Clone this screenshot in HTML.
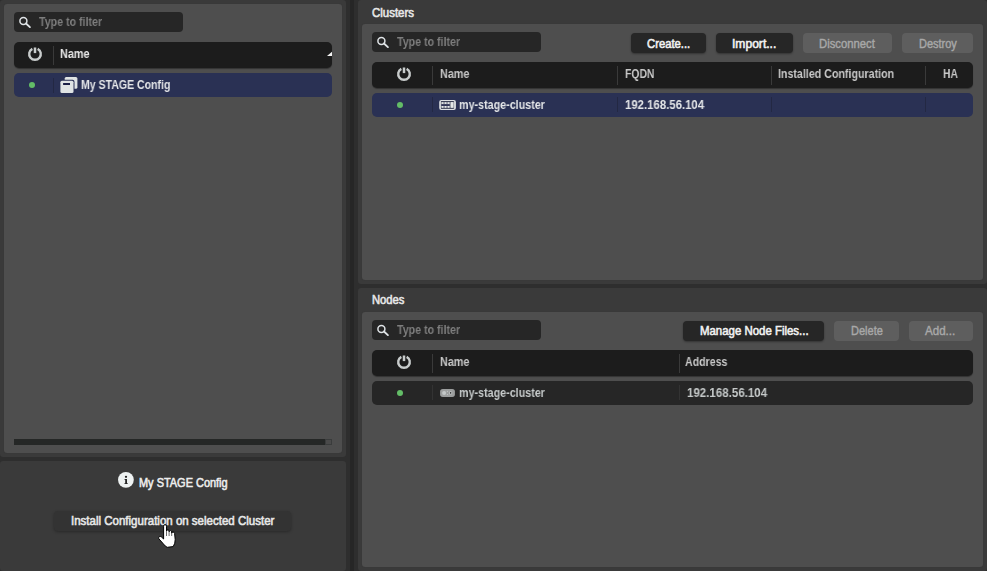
<!DOCTYPE html>
<html><head><meta charset="utf-8">
<style>
*{box-sizing:border-box;margin:0;padding:0}
html,body{width:987px;height:571px;overflow:hidden;background:#2e2e2e;font-family:"Liberation Sans",sans-serif;font-size:12px;position:relative}
.a{position:absolute}
svg{position:absolute;overflow:visible}
.outer{position:absolute;background:#3a3a3a;border-radius:3px}
.inner{position:absolute;background:#4e4e4e;border-radius:3px;box-shadow:0 0 1px 0 #333}
.search{position:absolute;background:#262626;border-radius:4px}
.hdr{position:absolute;background:#1c1c1c;border-radius:5px;box-shadow:0 1px 1px rgba(0,0,0,.35)}
.rowsel{position:absolute;background:#2a3154;border-radius:5px}
.row{position:absolute;background:#262626;border-radius:5px}
.btn{position:absolute;background:#262626;border-radius:4px;box-shadow:0 1px 2px rgba(0,0,0,.35)}
.btnd{position:absolute;background:#5e5e5e;border-radius:4px}
.t{position:absolute;white-space:nowrap;line-height:14px;font-size:12px;color:#e6e6e6;transform-origin:0 0}
.sep{position:absolute;width:1px;background:#3a3a3a}
.dot{position:absolute;width:6.4px;height:6.4px;border-radius:50%;background:#63bd67}
</style></head><body>
<!-- splitter center -->
<div class="a" style="left:350px;top:0;width:4px;height:571px;background:#262626"></div>

<!-- LEFT TOP -->
<div class="outer" style="left:0;top:0;width:346px;height:457px"></div>
<div class="inner" style="left:4px;top:4px;width:338px;height:449px"></div>
<div class="search" style="left:14px;top:12px;width:169px;height:20px"></div>
<svg style="left:14px;top:12px" width="20" height="20"><circle cx="9.4" cy="8.9" r="3.5" fill="none" stroke="#dfe3e6" stroke-width="1.5"/><path d="M12 11.5L15.9 15.1" stroke="#dfe3e6" stroke-width="1.9" stroke-linecap="round"/></svg>
<div class="hdr" style="left:14px;top:42px;width:318px;height:26px"></div>
<svg style="left:27px;top:45.7px" width="16" height="16"><path d="M5.37 2.83A5.8 5.8 0 1 0 10.63 2.83" fill="none" stroke="#c8cccc" stroke-width="2.4"/><rect x="6.75" y="1.5" width="2.5" height="5.6" fill="#c8cccc"/></svg>
<div class="sep" style="left:53px;top:46px;height:19px"></div>
<svg style="left:326px;top:51px" width="7" height="6"><path d="M1 5L6 5L6 0.8Z" fill="#f4f4f4"/></svg>
<div class="rowsel" style="left:14px;top:73px;width:318px;height:24px"></div>
<div class="dot" style="left:28.8px;top:81.8px"></div>
<div class="sep" style="left:53px;top:78px;height:15px;background:#232843"></div>
<svg style="left:56px;top:74px" width="26" height="22">
<rect x="8.7" y="2.9" width="12.7" height="11.9" rx="1.5" fill="#e0e4e4"/>
<rect x="3.4" y="5.7" width="15.1" height="14.4" rx="2" fill="#2a3154"/>
<rect x="4.4" y="6.7" width="13.1" height="12.4" rx="1.5" fill="#e0e4e4"/>
<rect x="7.1" y="9" width="6.9" height="2" fill="#1a1f45"/>
</svg>
<!-- scrollbar -->
<div class="a" style="left:14px;top:439px;width:311px;height:6px;background:#252726"></div>
<div class="a" style="left:325px;top:439px;width:7px;height:6px;background:#4a4a4a;border:1px solid #3a3c3c"></div>

<!-- LEFT BOTTOM -->
<div class="outer" style="left:0;top:461px;width:346px;height:110px"></div>
<svg style="left:114px;top:468px" width="24" height="24">
<circle cx="11.9" cy="11.8" r="7.9" fill="#eef2f2"/>
<circle cx="12" cy="8.8" r="1.15" fill="#252525"/>
<path d="M10.6 11H13V15.2H13.8V16.1H10.4V15.2H11.2V11.9H10.6Z" fill="#252525"/>
</svg>
<div class="btn" style="left:54px;top:511px;width:237px;height:20px;background:#333;box-shadow:0 1px 3px rgba(0,0,0,.3)"></div>

<!-- CLUSTERS -->
<div class="outer" style="left:358px;top:0;width:629px;height:284px"></div>
<div class="inner" style="left:362px;top:24px;width:621px;height:256px"></div>
<div class="search" style="left:372px;top:32px;width:169px;height:20px"></div>
<svg style="left:372px;top:32px" width="20" height="20"><circle cx="9.4" cy="8.9" r="3.5" fill="none" stroke="#dfe3e6" stroke-width="1.5"/><path d="M12 11.5L15.9 15.1" stroke="#dfe3e6" stroke-width="1.9" stroke-linecap="round"/></svg>
<div class="btn" style="left:631px;top:33px;width:75px;height:20px"></div>
<div class="btn" style="left:716px;top:33px;width:77px;height:20px"></div>
<div class="btnd" style="left:803px;top:33px;width:89px;height:20px"></div>
<div class="btnd" style="left:902px;top:33px;width:71px;height:20px"></div>
<div class="hdr" style="left:372px;top:62px;width:601px;height:26px"></div>
<svg style="left:396px;top:65.5px" width="16" height="16"><path d="M5.37 2.83A5.8 5.8 0 1 0 10.63 2.83" fill="none" stroke="#c8cccc" stroke-width="2.4"/><rect x="6.75" y="1.5" width="2.5" height="5.6" fill="#c8cccc"/></svg>
<div class="sep" style="left:432px;top:66px;height:19px"></div>
<div class="sep" style="left:617px;top:66px;height:19px"></div>
<div class="sep" style="left:771px;top:66px;height:19px"></div>
<div class="sep" style="left:925px;top:66px;height:19px"></div>
<div class="rowsel" style="left:372px;top:93px;width:601px;height:24px"></div>
<div class="dot" style="left:396.8px;top:101.8px"></div>
<div class="sep" style="left:432px;top:97px;height:15px;background:#232843"></div>
<div class="sep" style="left:617px;top:97px;height:15px;background:#232843"></div>
<div class="sep" style="left:771px;top:97px;height:15px;background:#232843"></div>
<div class="sep" style="left:925px;top:97px;height:15px;background:#232843"></div>
<svg style="left:436px;top:96px" width="24" height="18">
<rect x="3.2" y="3.9" width="16.7" height="10" rx="2" fill="#dde0e2"/>
<rect x="4.8" y="5.2" width="13.4" height="7.4" fill="#9a9ea6"/>
<rect x="5" y="5.2" width="12.8" height="0.9" fill="#232843"/>
<rect x="5" y="11.8" width="12.8" height="0.9" fill="#232843"/>
<rect x="5.2" y="8.3" width="8.6" height="1.5" fill="#1a1f45"/>
<circle cx="6.6" cy="7.1" r="0.8" fill="#f2f4f4"/><circle cx="9.6" cy="7.1" r="0.8" fill="#f2f4f4"/><circle cx="12.6" cy="7.1" r="0.8" fill="#f2f4f4"/>
<circle cx="6.6" cy="10.9" r="0.8" fill="#f2f4f4"/><circle cx="9.6" cy="10.9" r="0.8" fill="#f2f4f4"/><circle cx="12.6" cy="10.9" r="0.8" fill="#f2f4f4"/>
<rect x="15" y="6.1" width="2.2" height="5.7" fill="#e4e8e8"/>
</svg>

<!-- NODES -->
<div class="outer" style="left:358px;top:288px;width:629px;height:283px"></div>
<div class="inner" style="left:362px;top:312px;width:621px;height:255px"></div>
<div class="search" style="left:372px;top:320px;width:169px;height:20px"></div>
<svg style="left:372px;top:320px" width="20" height="20"><circle cx="9.4" cy="8.9" r="3.5" fill="none" stroke="#dfe3e6" stroke-width="1.5"/><path d="M12 11.5L15.9 15.1" stroke="#dfe3e6" stroke-width="1.9" stroke-linecap="round"/></svg>
<div class="btn" style="left:683px;top:321px;width:141px;height:20px"></div>
<div class="btnd" style="left:834px;top:321px;width:65px;height:20px"></div>
<div class="btnd" style="left:909px;top:321px;width:64px;height:20px"></div>
<div class="hdr" style="left:372px;top:350px;width:601px;height:26px"></div>
<svg style="left:396px;top:353.5px" width="16" height="16"><path d="M5.37 2.83A5.8 5.8 0 1 0 10.63 2.83" fill="none" stroke="#c8cccc" stroke-width="2.4"/><rect x="6.75" y="1.5" width="2.5" height="5.6" fill="#c8cccc"/></svg>
<div class="sep" style="left:432px;top:354px;height:19px"></div>
<div class="sep" style="left:679px;top:354px;height:19px"></div>
<div class="row" style="left:372px;top:381px;width:601px;height:24px"></div>
<div class="dot" style="left:396.8px;top:389.8px"></div>
<div class="sep" style="left:432px;top:385px;height:15px;background:#333"></div>
<div class="sep" style="left:679px;top:385px;height:15px;background:#333"></div>
<svg style="left:436px;top:384px" width="24" height="18">
<rect x="4.1" y="5" width="14.8" height="7.9" rx="2.6" fill="#9c9e9e"/>
<circle cx="8.1" cy="8.9" r="2" fill="#c4c8c8"/>
<circle cx="11.4" cy="7.3" r="0.6" fill="#c4c8c8"/>
<circle cx="11.4" cy="10.5" r="0.6" fill="#c4c8c8"/>
<circle cx="14.6" cy="8.9" r="1.7" fill="#c4c8c8"/>
<rect x="13.9" y="8.2" width="1.4" height="1.4" fill="#1e1e1e"/>
</svg>

<div class="t" style="left:39.00px;top:15px;transform:scaleX(0.8873);font-weight:bold;color:#7e7e7e;will-change:transform">Type to filter</div>
<div class="t" style="left:60.00px;top:47px;transform:scaleX(0.9030);font-weight:bold;color:#e8e8e8;will-change:transform">Name</div>
<div class="t" style="left:81.00px;top:78px;transform:scaleX(0.8782);font-weight:bold;color:#e4e6e8;will-change:transform">My STAGE Config</div>
<div class="t" style="left:139.20px;top:476px;transform:scaleX(0.9124);-webkit-text-stroke:0.55px #eeeeee;color:#eeeeee">My STAGE Config</div>
<div class="t" style="left:70.80px;top:514px;transform:scaleX(0.9587);-webkit-text-stroke:0.55px #e8e8e8;color:#e8e8e8">Install Configuration on selected Cluster</div>
<div class="t" style="left:372.00px;top:6px;transform:scaleX(0.9545);-webkit-text-stroke:0.55px #e8e8e8;color:#e8e8e8">Clusters</div>
<div class="t" style="left:397.00px;top:35px;transform:scaleX(0.8873);font-weight:bold;color:#7e7e7e;will-change:transform">Type to filter</div>
<div class="t" style="left:647.00px;top:37px;transform:scaleX(0.9391);-webkit-text-stroke:0.55px #f2f2f2;color:#f2f2f2">Create...</div>
<div class="t" style="left:732.20px;top:37px;transform:scaleX(1.0068);-webkit-text-stroke:0.55px #f2f2f2;color:#f2f2f2">Import...</div>
<div class="t" style="left:819.30px;top:37px;transform:scaleX(0.9400);-webkit-text-stroke:0.4px #a8a8a8;color:#a8a8a8">Disconnect</div>
<div class="t" style="left:918.50px;top:37px;transform:scaleX(0.9143);-webkit-text-stroke:0.4px #a8a8a8;color:#a8a8a8">Destroy</div>
<div class="t" style="left:439.60px;top:67px;transform:scaleX(0.9000);font-weight:bold;color:#c8c8c8;will-change:transform">Name</div>
<div class="t" style="left:624.80px;top:67px;transform:scaleX(0.8667);font-weight:bold;color:#c8c8c8;will-change:transform">FQDN</div>
<div class="t" style="left:778.40px;top:67px;transform:scaleX(0.8885);font-weight:bold;color:#c8c8c8;will-change:transform">Installed Configuration</div>
<div class="t" style="left:942.80px;top:67px;transform:scaleX(0.8529);font-weight:bold;color:#c8c8c8;will-change:transform">HA</div>
<div class="t" style="left:458.71px;top:98px;transform:scaleX(0.8947);font-weight:bold;color:#e4e6e8;will-change:transform">my-stage-cluster</div>
<div class="t" style="left:625.40px;top:98px;transform:scaleX(0.9476);font-weight:bold;color:#e4e6e8;will-change:transform">192.168.56.104</div>
<div class="t" style="left:371.60px;top:293px;transform:scaleX(0.9343);-webkit-text-stroke:0.55px #e8e8e8;color:#e8e8e8">Nodes</div>
<div class="t" style="left:397.00px;top:323px;transform:scaleX(0.8873);font-weight:bold;color:#7e7e7e;will-change:transform">Type to filter</div>
<div class="t" style="left:699.50px;top:324px;transform:scaleX(0.9518);-webkit-text-stroke:0.55px #f2f2f2;color:#f2f2f2">Manage Node Files...</div>
<div class="t" style="left:850.50px;top:324px;transform:scaleX(0.9171);-webkit-text-stroke:0.4px #a8a8a8;color:#a8a8a8">Delete</div>
<div class="t" style="left:925.30px;top:324px;transform:scaleX(0.9645);-webkit-text-stroke:0.4px #a8a8a8;color:#a8a8a8">Add...</div>
<div class="t" style="left:439.60px;top:355px;transform:scaleX(0.9000);font-weight:bold;color:#c8c8c8;will-change:transform">Name</div>
<div class="t" style="left:685.40px;top:355px;transform:scaleX(0.8833);font-weight:bold;color:#c8c8c8;will-change:transform">Address</div>
<div class="t" style="left:459.01px;top:386px;transform:scaleX(0.8947);font-weight:bold;color:#c6caca;will-change:transform">my-stage-cluster</div>
<div class="t" style="left:686.70px;top:386px;transform:scaleX(0.9595);font-weight:bold;color:#c6caca;will-change:transform">192.168.56.104</div>

<!-- cursor -->
<svg style="left:156px;top:522px" width="24" height="28">
<path d="M7.6 4.2Q7.6 2.6 9 2.6Q10.5 2.6 10.5 4.2L10.5 9.2Q10.5 7.9 11.8 7.9Q13.1 7.9 13.1 9.2L13.1 9.9Q13.1 8.6 14.4 8.6Q15.7 8.6 15.7 9.9L15.7 11.2Q15.7 10 17 10Q18.4 10 18.6 11.4L19.2 17.5Q19.3 21.5 17.2 24.6L11.2 25.3Q9.2 24.4 7.3 21.8L2.9 16.8Q2.1 15.6 3.1 14.8Q4.3 14 5.6 15.1L7.6 17Z" fill="#ffffff" stroke="#000" stroke-width="1" stroke-linejoin="round"/>
<path d="M10.5 9.4V14M13.1 10V14M15.7 11.2V14" stroke="#000" stroke-width="0.6"/>
</svg>
</body></html>
